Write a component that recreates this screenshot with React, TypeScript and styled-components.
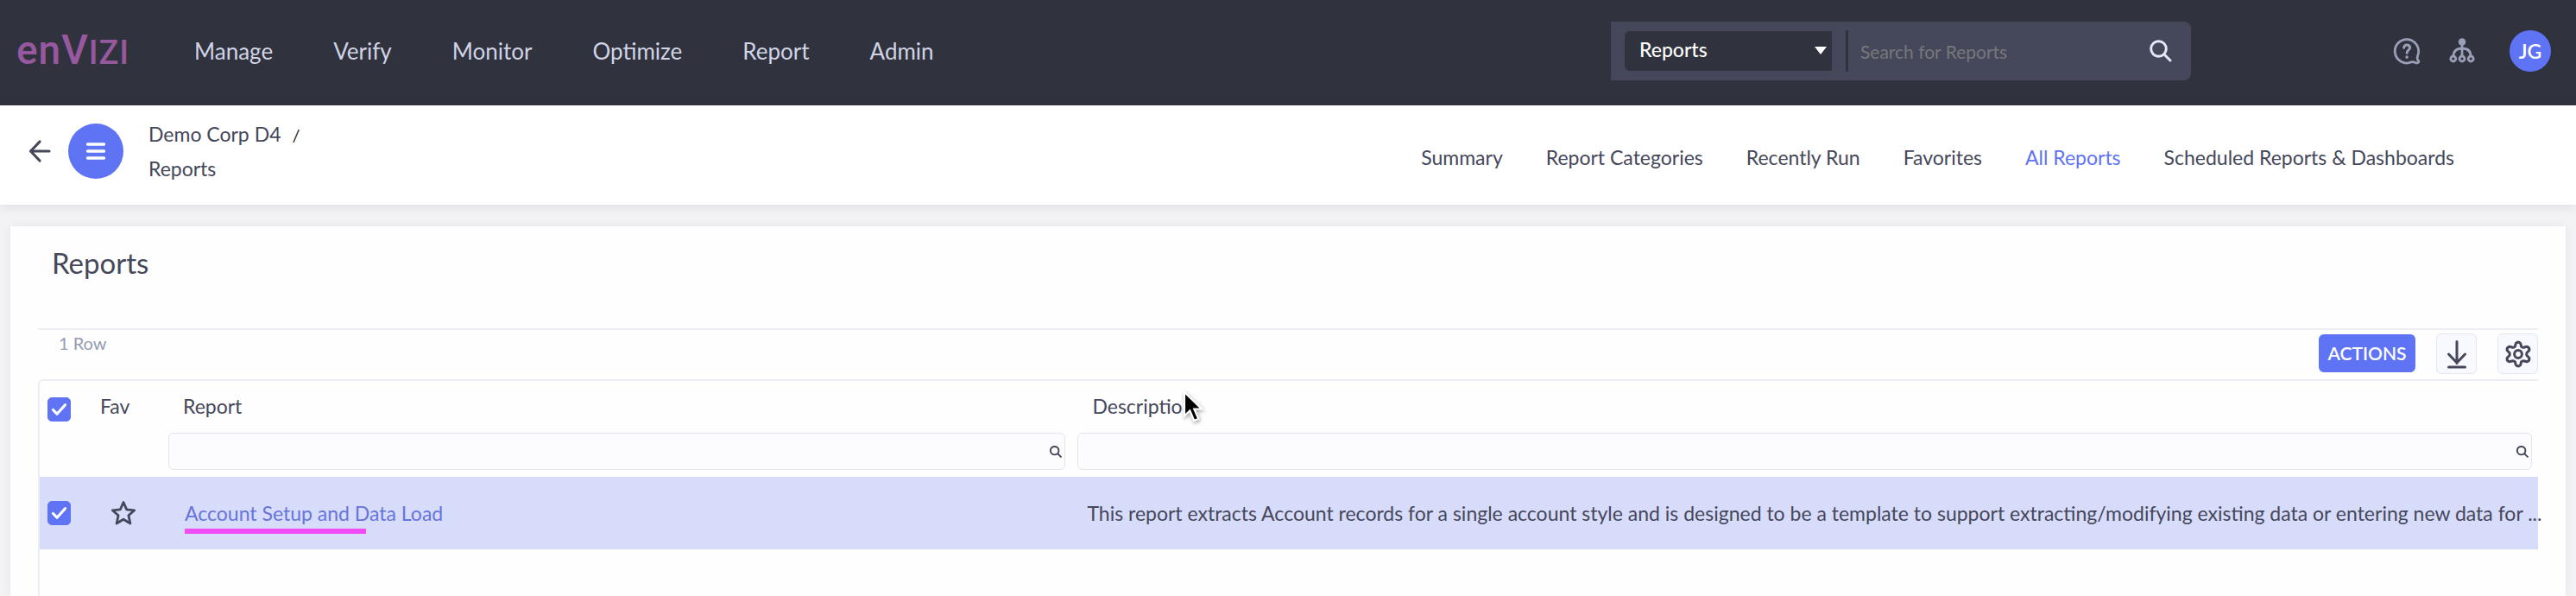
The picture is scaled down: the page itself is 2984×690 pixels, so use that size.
import React, { useState } from "react";
import styled, { createGlobalStyle, css } from "styled-components";

const colors = {
  ink: "#45475a",
  dark: "#30323e",
  slate: "#45475a",
  accent: "#5f74f5",
  link: "#6674dc",
  muted: "#969bb4",
  line: "#eceef5",
  selected: "#d8dcfb",
  magenta: "#ee4df5",
};

const GlobalStyle = createGlobalStyle`
  *, *::before, *::after { box-sizing: border-box; }
  body {
    margin: 0;
    background: #f3f3f6;
    color: ${colors.ink};
    font-family: Lato, "Open Sans", sans-serif;
    font-size: 23px;
    line-height: 32px;
  }
  button, input, select { font: inherit; color: inherit; margin: 0; }
  a { color: inherit; text-decoration: none; }
`;

const Page = styled.div`
  min-height: 100vh;
  display: flex;
  flex-direction: column;
`;

const Header = styled.header`
  display: flex;
  align-items: center;
  min-height: 122px;
  padding: 0 29px 4px 19px;
  background: ${colors.dark};
`;

const Logo = styled.a`
  display: flex;
  align-items: baseline;
  justify-content: space-between;
  width: 130px;
  color: #96589e;
  font-family: Roboto, sans-serif;
  font-weight: 500;
  line-height: 60px;
`;

const LogoPart = styled.span<{ $size: number }>`
  font-size: ${(p) => p.$size}px;
`;

const MainNav = styled.nav`
  display: flex;
  gap: 70px;
  margin-left: 76px;
  font-size: 26px;
  color: #d0d4e5;
`;

const SearchBox = styled.form`
  display: flex;
  align-items: center;
  width: 672px;
  height: 68px;
  margin-left: auto;
  padding: 0 22px 0 16px;
  border-radius: 0 8px 8px 0;
  background: ${colors.slate};
`;

const ScopePicker = styled.div`
  position: relative;
  width: 240px;
`;

const ScopeSelect = styled.select`
  display: block;
  width: 100%;
  height: 46px;
  padding: 0 17px 4px;
  border: 0;
  border-radius: 6px 0 0 6px;
  background: ${colors.dark};
  color: #fff;
  font-weight: 500;
  appearance: none;
`;

const Caret = styled.svg`
  position: absolute;
  right: 6px;
  top: 18px;
  pointer-events: none;
`;

const SearchInput = styled.input`
  flex: 1;
  min-width: 0;
  height: 48px;
  margin-left: 16px;
  padding: 0 14px;
  border: 0;
  border-left: 3px solid ${colors.dark};
  background: transparent;
  color: #fff;
  font-size: 21px;
  &::placeholder { color: #77787c; opacity: 1; }
`;

const PlainButton = styled.button`
  display: flex;
  align-items: center;
  justify-content: center;
  padding: 0;
  border: 0;
  background: none;
  cursor: pointer;
`;

const SearchButton = styled(PlainButton)`
  color: #e4e7f5;
`;

const Tools = styled.div`
  display: flex;
  align-items: center;
  gap: 32px;
  margin-left: 234px;
  color: #9a9fb8;
`;

const Avatar = styled(PlainButton)`
  width: 48px;
  height: 48px;
  margin-left: 7px;
  border-radius: 50%;
  background: ${colors.accent};
  color: #fff;
  font-weight: 600;
`;

const SubHeader = styled.div`
  display: flex;
  align-items: center;
  min-height: 115px;
  padding: 0 141px 9px 32px;
  background: #fff;
  box-shadow: 0 2px 12px rgba(40, 40, 60, 0.1);
`;

const MenuButton = styled(PlainButton)`
  width: 64px;
  height: 64px;
  margin: 0 29px 0 19px;
  border-radius: 50%;
  background: ${colors.accent};
  color: #fff;
`;

const Breadcrumb = styled.ol`
  margin: 0;
  padding: 0;
  list-style: none;
  line-height: 39px;
`;

const Slash = styled.span`
  margin-left: 13px;
  color: #222;
  font-size: 20px;
`;

const Tabs = styled.nav`
  display: flex;
  gap: 50px;
  margin-left: auto;
  padding-top: 14px;
`;

const Tab = styled.a<{ $active?: boolean }>`
  ${(p) => p.$active && css`color: ${colors.accent};`}
`;

const Card = styled.main`
  flex: 1;
  display: flex;
  flex-direction: column;
  margin: 25px 12px 0;
  padding: 0 32px;
  background: #fefefe;
  box-shadow: 0 0 12px rgba(40, 40, 60, 0.06);
`;

const Title = styled.h1`
  margin: 0;
  padding: 22px 16px 56px;
  font-size: 33px;
  font-weight: 400;
  line-height: 40px;
`;

const Toolbar = styled.div`
  display: flex;
  align-items: flex-start;
  gap: 24px;
  padding-top: 4px;
  height: 59px;
  border-top: 2px solid ${colors.line};
`;

const RowCount = styled.span`
  margin-right: auto;
  padding-left: 24px;
  color: ${colors.muted};
  font-size: 20px;
  line-height: 22px;
`;

const ActionsButton = styled.button`
  width: 112px;
  height: 44px;
  margin-top: 1px;
  padding: 0;
  border: 0;
  border-radius: 6px;
  background: ${colors.accent};
  color: #fff;
  font-size: 21px;
  font-weight: 600;
`;

const IconButton = styled(PlainButton)`
  width: 47px;
  height: 47px;
  border: 1px solid #e4e6f0;
  border-radius: 6px;
  background: #f8f9fe;
`;

const Grid = styled.div`
  flex: 1;
  border: solid ${colors.line};
  border-width: 2px 0 0 2px;
  border-radius: 6px 0 0 0;
`;

const Table = styled.table`
  width: 100%;
  table-layout: fixed;
  border-collapse: collapse;
`;

const Col = styled.col<{ $width?: string }>`
  width: ${(p) => p.$width ?? "auto"};
`;

const HeadCell = styled.th<{ $inset: number; $low?: boolean }>`
  height: 57px;
  padding: ${(p) => (p.$low ? 8 : 0)}px 0 0 ${(p) => p.$inset}px;
  font-weight: 400;
  text-align: left;
`;

const FilterCell = styled.td`
  height: 54px;
  padding: 3px 7px 8px;
`;

const FilterBox = styled.div`
  display: flex;
  align-items: center;
  height: 43px;
  padding-right: 3px;
  border: 1px solid #e3e5ee;
  border-radius: 6px;
  background: #fcfcfe;
`;

const FilterInput = styled.input`
  flex: 1;
  min-width: 0;
  padding: 0 10px;
  border: 0;
  background: transparent;
`;

const SelectedRow = styled.tr`
  background: ${colors.selected};
`;

const Cell = styled.td<{ $inset: number }>`
  height: 84px;
  padding: 0 0 0 ${(p) => p.$inset}px;
  white-space: nowrap;
`;

const CheckBox = styled.label`
  position: relative;
  display: block;
  width: 27px;
  height: 28px;
`;

const CheckInput = styled.input`
  display: block;
  width: 27px;
  height: 28px;
  appearance: none;
  border: 1px solid ${colors.accent};
  border-radius: 5px;
  &:checked { background: ${colors.accent}; }
`;

const CheckMark = styled.svg`
  position: absolute;
  inset: 0;
  pointer-events: none;
`;

const ReportLink = styled.a`
  position: relative;
  color: ${colors.link};
  &::after {
    content: "";
    position: absolute;
    left: 0;
    top: 32px;
    width: 210px;
    height: 6px;
    background: ${colors.magenta};
  }
`;

const HeadLabel = styled.span`
  position: relative;
`;

const Pointer = styled.svg`
  position: absolute;
  left: 104px;
  top: -5px;
  filter: drop-shadow(1px 2px 2px rgba(0, 0, 0, 0.35));
`;

const SearchGlyph = ({ size, stroke }: { size: number; stroke: number }) => (
  <svg width={size} height={size} viewBox="0 0 26 26" fill="none" stroke="currentColor" strokeWidth={stroke} strokeLinecap="round" aria-hidden="true">
    <circle cx="10.5" cy="10.5" r="8.8" />
    <path d="M17 17l7 7" />
  </svg>
);

const Check = ({ label }: { label: string }) => {
  const [on, setOn] = useState(true);
  return (
    <CheckBox>
      <CheckInput type="checkbox" aria-label={label} checked={on} onChange={(e) => setOn(e.target.checked)} />
      {on && (
        <CheckMark width="27" height="27" viewBox="0 0 27 27" fill="none" stroke="#fff" strokeWidth="3.2" strokeLinecap="round" strokeLinejoin="round">
          <path d="M6.5 14.5l4.5 4.7 9.5-10.5" />
        </CheckMark>
      )}
    </CheckBox>
  );
};

const Filter = ({ label }: { label: string }) => (
  <FilterBox>
    <FilterInput type="text" aria-label={label} />
    <SearchGlyph size={14} stroke={3.6} />
  </FilterBox>
);

const sections = ["Manage", "Verify", "Monitor", "Optimize", "Report", "Admin"];
const tabs = ["Summary", "Report Categories", "Recently Run", "Favorites", "All Reports", "Scheduled Reports & Dashboards"];

export default function App() {
  return (
    <Page>
      <GlobalStyle />
      <Header>
        <Logo href="#" aria-label="enVIZI">
          <LogoPart $size={46}>e</LogoPart>
          <LogoPart $size={46}>n</LogoPart>
          <LogoPart $size={48}>V</LogoPart>
          <LogoPart $size={38}>I</LogoPart>
          <LogoPart $size={38}>Z</LogoPart>
          <LogoPart $size={38}>I</LogoPart>
        </Logo>
        <MainNav aria-label="Main">
          {sections.map((s) => <a key={s} href="#">{s}</a>)}
        </MainNav>
        <SearchBox role="search" onSubmit={(e) => e.preventDefault()}>
          <ScopePicker>
            <ScopeSelect aria-label="Search in">
              <option>Reports</option>
            </ScopeSelect>
            <Caret width="14" height="9" viewBox="0 0 14 9" fill="#fff"><path d="M0 0h14L7 9z" /></Caret>
          </ScopePicker>
          <SearchInput type="text" placeholder="Search for Reports" aria-label="Search for Reports" />
          <SearchButton type="submit" aria-label="Search">
            <SearchGlyph size={26} stroke={3} />
          </SearchButton>
        </SearchBox>
        <Tools>
          <PlainButton aria-label="Help">
            <svg width="32" height="32" viewBox="0 0 32 32" fill="none" stroke="currentColor" strokeWidth="2.8" strokeLinecap="round" strokeLinejoin="round">
              <path d="M28.6 21.5A13.7 13.7 0 1 0 21.5 28.8C23 28.3 24 28.6 25.2 29.2C26.6 29.9 28.6 30 29.4 29.2C30.2 28.4 29.8 27.4 29 26.7C27.8 25.5 28 23.5 28.6 21.5" />
              <path d="M12.6 12.3c.3-2 1.7-3.3 3.5-3.3 2 0 3.5 1.4 3.5 3.3 0 2.9-3.5 2.9-3.5 6" strokeWidth="3" />
              <path d="M16.1 23v.2" strokeWidth="3.4" />
            </svg>
          </PlainButton>
          <PlainButton aria-label="Organization">
            <svg width="32" height="32" viewBox="0 0 32 32" fill="none" stroke="currentColor" strokeWidth="2.8">
              <circle cx="16" cy="5.5" r="4.3" fill="currentColor" stroke="none" />
              <path d="M16 8v14M6 22c0-6 3.5-9 10-9s10 3 10 9" />
              <circle cx="5.8" cy="25" r="3" />
              <circle cx="16" cy="25" r="3" />
              <circle cx="26.2" cy="25" r="3" />
            </svg>
          </PlainButton>
          <Avatar aria-label="Account JG">JG</Avatar>
        </Tools>
      </Header>

      <SubHeader>
        <PlainButton aria-label="Back">
          <svg width="28" height="28" viewBox="0 0 28 28" fill="none" stroke="currentColor" strokeWidth="3.2" strokeLinecap="round" strokeLinejoin="round">
            <path d="M25 14H3.5M14 3L3.5 14 14 25" />
          </svg>
        </PlainButton>
        <MenuButton aria-label="Menu">
          <svg width="24" height="24" viewBox="0 0 24 24" stroke="currentColor" strokeWidth="3.4" strokeLinecap="round">
            <path d="M2.5 4h19M2.5 12h19M2.5 20h19" />
          </svg>
        </MenuButton>
        <Breadcrumb>
          <li><a href="#">Demo Corp D4</a><Slash>/</Slash></li>
          <li>Reports</li>
        </Breadcrumb>
        <Tabs aria-label="Reports">
          {tabs.map((t) => <Tab key={t} href="#" $active={t === "All Reports"}>{t}</Tab>)}
        </Tabs>
      </SubHeader>

      <Card>
        <Title>Reports</Title>
        <Toolbar>
          <RowCount>1 Row</RowCount>
          <ActionsButton>ACTIONS</ActionsButton>
          <IconButton aria-label="Download">
            <svg width="24" height="34" viewBox="0 0 24 34" fill="none" stroke="currentColor" strokeWidth="3" strokeLinecap="round" strokeLinejoin="round">
              <path d="M12 2.5v25M2.5 17L12 27 21.5 17M2.5 32h19" />
            </svg>
          </IconButton>
          <IconButton aria-label="Settings">
            <svg width="32" height="32" viewBox="0 0 32 32" fill="none" stroke="currentColor" strokeWidth="3" strokeLinejoin="round">
              <path d="M13.3 3.5Q16 .8 18.7 3.5L19.6 7.2Q20.7 8.3 22.3 8.3L26 7.2Q29.6 8.1 28.7 11.8L26 14.5Q25.5 16 26 17.5L28.7 20.2Q29.6 23.9 26 24.8L22.3 23.7Q20.7 23.7 19.6 24.8L18.7 28.5Q16 31.2 13.3 28.5L12.4 24.8Q11.3 23.7 9.7 23.7L6 24.8Q2.4 23.9 3.3 20.2L6 17.5Q6.5 16 6 14.5L3.3 11.8Q2.4 8.1 6 7.2L9.7 8.3Q11.3 8.3 12.4 7.2Z" />
              <circle cx="16" cy="16" r="4.4" />
            </svg>
          </IconButton>
        </Toolbar>
        <Grid>
          <Table>
            <colgroup>
              <Col $width="60px" />
              <Col $width="82px" />
              <Col $width="36.4%" />
              <Col />
            </colgroup>
            <thead>
              <tr>
                <HeadCell $inset={9} $low><Check label="Select all rows" /></HeadCell>
                <HeadCell $inset={10}>Fav</HeadCell>
                <HeadCell $inset={24}>Report</HeadCell>
                <HeadCell $inset={24}>
                  <HeadLabel>
                    Description
                    <Pointer width="26" height="40" viewBox="0 0 26 40">
                      <path d="M3 3v27.5l6.3-6 5 11.5 5-2.2-5-11.3h8.7z" fill="#000" stroke="#fff" strokeWidth="2.2" />
                    </Pointer>
                  </HeadLabel>
                </HeadCell>
              </tr>
              <tr>
                <FilterCell />
                <FilterCell />
                <FilterCell><Filter label="Filter by report" /></FilterCell>
                <FilterCell><Filter label="Filter by description" /></FilterCell>
              </tr>
            </thead>
            <tbody>
              <SelectedRow>
                <Cell $inset={9}><Check label="Select Account Setup and Data Load" /></Cell>
                <Cell $inset={22}>
                  <PlainButton aria-label="Add to favorites">
                    <svg width="30" height="30" viewBox="0 0 30 30" fill="none" stroke="currentColor" strokeWidth="2.8" strokeLinejoin="round">
                      <path d="M15 2.5l3.7 8.4 9 .9-6.8 6 2 9.2-7.9-4.8-7.9 4.8 2-9.2-6.8-6 9-.9z" />
                    </svg>
                  </PlainButton>
                </Cell>
                <Cell $inset={26}><ReportLink href="#">Account Setup and Data Load</ReportLink></Cell>
                <Cell $inset={18}>
                  This report extracts Account records for a single account style and is designed to be a template to support extracting/modifying existing data or entering new data for ...
                </Cell>
              </SelectedRow>
            </tbody>
          </Table>
        </Grid>
      </Card>
    </Page>
  );
}
